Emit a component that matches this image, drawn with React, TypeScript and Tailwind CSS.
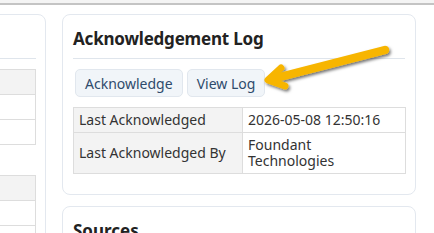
import React from "react";

const font = { fontFamily: '"Noto Sans", "Open Sans", sans-serif' };

function Arrow() {
  return (
    <svg
      className="absolute left-0 top-0 pointer-events-none"
      width="434"
      height="233"
      viewBox="0 0 434 233"
    >
      <defs>
        <filter id="sh" x="-20%" y="-50%" width="140%" height="200%">
          <feDropShadow dx="1.5" dy="2" stdDeviation="1.5" floodColor="#000" floodOpacity="0.55" />
        </filter>
      </defs>
      <g filter="url(#sh)" stroke="#f7b500" strokeLinecap="round" strokeLinejoin="round" fill="none">
        <path d="M385 50 L272 79" strokeWidth="8.5" />
        <path d="M281 68 L268 80 L285 86" strokeWidth="7" />
      </g>
    </svg>
  );
}

export default function App() {
  return (
    <div className="relative w-[434px] h-[233px] overflow-hidden bg-white" style={font}>
      <div className="h-[3px] bg-[#f4f4f4]" />
      <div className="h-[2px] bg-[#c4c4c4]" />
      <div className="flex gap-4 pt-[9px] ml-[-154px]">
        {/* left card (cut off) */}
        <div className="w-[200px] shrink-0 rounded-lg border border-[#e3e8ef] bg-white pr-[9px] pt-[43px] h-[260px]">
          <div className="border-t border-[#dfe5ec]" />
          <div className="mt-[10px] border border-[#dddddd]">
            <div className="h-[25px] bg-[#f3f3f3] border-b border-[#dddddd]" />
            <div className="h-[25px] border-b border-[#dddddd]" />
            <div className="h-[24px]" />
          </div>
          <div className="mt-[30px] border border-[#dddddd]">
            <div className="h-[25px] bg-[#f3f3f3] border-b border-[#dddddd]" />
            <div className="h-[25px] border-b border-[#dddddd]" />
            <div className="h-[24px]" />
          </div>
        </div>
        {/* right column */}
        <div className="flex flex-col gap-[11px] w-[354px] shrink-0">
          <div className="rounded-lg border border-[#e3e8ef] bg-white px-[10px] pt-[10px] pb-[20px]">
            <h2 className="text-[17px] leading-[28px] font-bold text-[#222222] tracking-[-0.2px]">
              Acknowledgement Log
            </h2>
            <div className="mt-[5px] border-t border-[#dfe5ec]" />
            <div className="mt-[10px] flex gap-[4px] pl-[2px]">
              <button className="h-[28px] px-[9px] rounded-[5px] border border-[#e1e7ee] bg-[#f1f5f9] text-[14px] text-[#2f4b6c]">
                Acknowledge
              </button>
              <button className="h-[28px] px-[9px] rounded-[5px] border border-[#e1e7ee] bg-[#f1f5f9] text-[14px] text-[#2f4b6c]">
                View Log
              </button>
            </div>
            <table className="mt-[10px] w-[333px] border-collapse text-[14px] leading-[16px] text-[#333333]">
              <tbody>
                <tr>
                  <td className="w-[169px] border border-[#dddddd] bg-[#f3f3f3] px-[5px] py-[4px] align-top">
                    Last Acknowledged
                  </td>
                  <td className="border border-[#dddddd] px-[5px] py-[4px] align-top">2026-05-08 12:50:16</td>
                </tr>
                <tr>
                  <td className="border border-[#dddddd] bg-[#f3f3f3] px-[5px] py-[4px] align-middle">
                    Last Acknowledged By
                  </td>
                  <td className="border border-[#dddddd] px-[5px] py-[4px] align-top">
                    <div className="leading-[16px]">Foundant</div>
                    <div className="leading-[16px]">Technologies</div>
                  </td>
                </tr>
              </tbody>
            </table>
          </div>
          <div className="rounded-lg border border-[#e3e8ef] bg-white px-[10px] pt-[10px] h-[60px]">
            <h2 className="text-[17px] leading-[28px] font-bold text-[#222222]">Sources</h2>
          </div>
        </div>
      </div>
      <Arrow />
    </div>
  );
}
